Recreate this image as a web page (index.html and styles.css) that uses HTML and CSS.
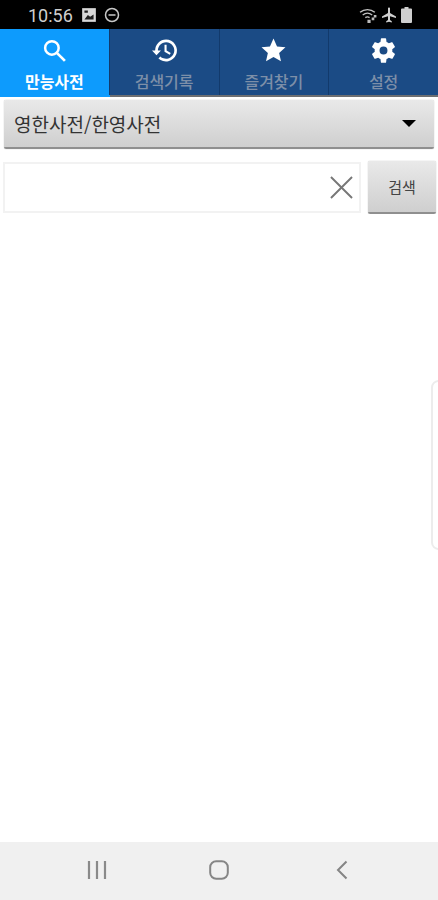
FILE: index.html
```html
<!DOCTYPE html>
<html lang="ko">
<head>
<meta charset="utf-8">
<title>만능사전</title>
<link rel="stylesheet" href="styles.css">
</head>
<body>
<div class="app">
  <header class="status">
    <div class="status-left">
      <span class="time">10:56</span>
      <svg class="ic-pic" viewBox="0 0 14 14"><path fill="#d8d8d8" d="M1 1h12v12H1z"/><path fill="#000" d="M3 3h3v2H3zM3 11l3-4 2 1.500 3-2V11z" opacity=".85"/></svg>
      <svg class="ic-dnd" viewBox="0 0 16 16"><circle cx="8" cy="8" r="6.500" fill="none" stroke="#c8c8c8" stroke-width="1.500"/><path d="M4.500 8h7" stroke="#c8c8c8" stroke-width="1.500"/></svg>
    </div>
    <div class="status-right">
      <svg class="ic-wifi" viewBox="0 0 18 14"><path d="M1 4c4-3.500 10-3.500 14 0M3.500 6.500c3-2.300 6-2.300 9 0M6 9c1.500-1 2.500-1 4 0" fill="none" stroke="#c4c4c4" stroke-width="1.300"/><path fill="#bbb" d="M8 11h3v3H8zM12 9h2.500v2.500H12zM14 6.500h2.500V9H14z"/></svg>
      <svg class="ic-plane" viewBox="0 0 16 16"><path fill="#d0d0d0" d="M7 1.500c0-1.300 2-1.300 2 0V6l6 3.500V11L9 9.300V13l1.800 1.300V15.500L8 14.800l-2.800.7v-1.200L7 13V9.300L1 11V9.500L7 6z"/></svg>
      <svg class="ic-batt" viewBox="0 0 11 16"><path fill="#cfcfcf" d="M3.500 0h4v1.500H10a1 1 0 0 1 1 1V15a1 1 0 0 1-1 1H1a1 1 0 0 1-1-1V2.500a1 1 0 0 1 1-1h2.500z"/></svg>
    </div>
  </header>

  <nav class="tabs">
    <div class="tab active">
      <svg class="tab-icon" viewBox="0 0 24 24"><circle cx="9.500" cy="9.500" r="6.500" fill="none" stroke="#fff" stroke-width="2.400"/><path d="M14.500 14.500l7.500 7.500" stroke="#fff" stroke-width="2.600"/></svg>
      <span class="tab-label">만능사전</span>
    </div>
    <div class="tab">
      <svg class="tab-icon" viewBox="0 0 24 24"><path fill="#fff" d="M13.500 1.500A10.500 10.500 0 0 0 3 12H0l4.300 4.500L8.600 12h-3a7.900 7.900 0 1 1 2.400 5.700l-1.800 1.900A10.500 10.500 0 1 0 13.500 1.500z"/><path fill="#fff" d="M12 6.500v6.600l5 3 1-1.700-4-2.300V6.500z"/></svg>
      <span class="tab-label">검색기록</span>
    </div>
    <div class="tab">
      <svg class="tab-icon" viewBox="0 0 24 24"><path fill="#fff" d="M12 .5l3.400 7.600 8.100.8-6.100 5.400 1.800 8L12 18.200l-7.200 4.100 1.800-8L.5 8.900l8.100-.8z"/></svg>
      <span class="tab-label">즐겨찾기</span>
    </div>
    <div class="tab">
      <svg class="tab-icon" viewBox="0 0 24 24"><path fill="#fff" fill-rule="evenodd" d="M20.400 13.300a8.500 8.500 0 0 0 0-2.600l2.400-1.800a.6.600 0 0 0 .1-.7l-2.300-4a.6.600 0 0 0-.7-.2l-2.800 1.100a8 8 0 0 0-2.200-1.300L14.500.8a.6.600 0 0 0-.6-.5H10.100a.6.600 0 0 0-.6.500L9.100 3.800a8 8 0 0 0-2.200 1.300L4.100 4a.6.600 0 0 0-.7.200l-2.300 4a.6.600 0 0 0 .1.700l2.400 1.800a8.500 8.500 0 0 0 0 2.600l-2.400 1.800a.6.600 0 0 0-.1.700l2.300 4c.1.200.4.300.7.200l2.800-1.100a8 8 0 0 0 2.200 1.300l.4 3c0 .3.300.5.600.5h3.800c.3 0 .6-.2.600-.5l.4-3a8 8 0 0 0 2.200-1.300l2.800 1.100c.3.100.6 0 .7-.2l2.300-4a.6.600 0 0 0-.1-.7zM12 15.800a3.800 3.800 0 1 1 0-7.600 3.800 3.800 0 0 1 0 7.600z"/></svg>
      <span class="tab-label">설정</span>
    </div>
  </nav>
  <div class="tabs-rule"><span class="rule-active"></span></div>

  <div class="select-row">
    <div class="select">
      <span class="select-text">영한사전/한영사전</span>
      <span class="caret"></span>
    </div>
  </div>

  <div class="search-row">
    <div class="search-box">
      <svg class="clear" viewBox="0 0 24 24"><path d="M1 1l22 22M23 1L1 23" stroke="#777" stroke-width="2" fill="none"/></svg>
    </div>
    <div class="search-btn">검색</div>
  </div>

  <main class="content">
    <div class="edge-handle"></div>
  </main>

  <footer class="navbar">
    <svg class="nav-recent" viewBox="0 0 20 20"><path d="M2 1v18M10 1v18M18 1v18" stroke="#8a8a8a" stroke-width="2.200"/></svg>
    <svg class="nav-home" viewBox="0 0 20 20"><rect x="1.200" y="1.200" width="17.600" height="17.600" rx="6" fill="none" stroke="#858585" stroke-width="2"/></svg>
    <svg class="nav-back" viewBox="0 0 12 20"><path d="M10.500 1.500L2 10l8.500 8.500" fill="none" stroke="#858585" stroke-width="2"/></svg>
  </footer>
</div>
</body>
</html>
```

FILE: styles.css
```css
* { box-sizing: border-box; }
html, body { margin: 0; padding: 0; background: #fff; }
body { font-family: "Noto Sans CJK KR", "Noto Sans", sans-serif; }
.app { width: 438px; height: 900px; display: flex; flex-direction: column; overflow: hidden; }

.status { height: 29px; flex: none; background: #000; display: flex; justify-content: space-between; align-items: center; padding: 1px 26px 0 28px; }
.status-left { display: flex; align-items: center; }
.status-right { display: flex; align-items: center; }
.time { font-family: Roboto, sans-serif; font-size: 18px; color: #cfcfcf; width: 53px; }
.ic-pic { width: 16px; height: 16px; margin-right: 7px; }
.ic-dnd { width: 16px; height: 16px; }
.ic-wifi { width: 19px; height: 15px; margin-right: 3px; }
.ic-plane { width: 16px; height: 16px; margin-right: 4px; }
.ic-batt { width: 11px; height: 16px; }

.tabs { height: 66px; flex: none; display: flex; background: #1b4b85; }
.tab { flex: 1 1 0; display: flex; flex-direction: column; align-items: center; padding-top: 9px; border-left: 1px solid #123a6c; }
.tab.active { background: #0d9bfd; border-left: 0; }
.tab-icon { width: 25px; height: 25px; flex: none; }
.tab-label { font-size: 16px; line-height: 20px; margin-top: 8px; color: #7d8fa8; font-weight: 500; }
.active .tab-label { color: #fff; font-weight: 700; }
.tabs-rule { height: 2px; flex: none; background: #6d6f72; }
.rule-active { display: block; width: 110px; height: 2px; background: #0d9bfd; }

.select-row { flex: none; padding: 3px 4px 0; }
.select { height: 49px; display: flex; align-items: center; justify-content: space-between; padding: 0 18px 0 10px; border-radius: 2px; background: linear-gradient(#e9e9e9, #cfcfcf); border-bottom: 2px solid #8f8f8f; box-shadow: 0 0 1px #9a9a9a; }
.select-text { font-size: 19px; color: #333; }
.caret { width: 0; height: 0; border-left: 7px solid transparent; border-right: 7px solid transparent; border-top: 7px solid #000; }

.search-row { flex: none; display: flex; align-items: flex-start; padding: 12px 2px 0 3px; }
.search-box { width: 358px; height: 51px; margin-top: 1px; background: #fff; border: 2px solid #f2f2f2; display: flex; align-items: center; justify-content: flex-end; padding-right: 6px; }
.clear { width: 23px; height: 23px; }
.search-btn { width: 68px; height: 53px; margin-left: 7px; display: flex; align-items: center; justify-content: center; font-size: 15px; color: #444; border-radius: 2px; background: linear-gradient(#e9e9e9, #cfcfcf); border-bottom: 2px solid #8f8f8f; box-shadow: 0 0 1px #9a9a9a; }

.content { flex: 1 1 auto; position: relative; background: #fff; }
.edge-handle { position: absolute; right: -8px; top: 166px; width: 15px; height: 170px; border: 2px solid #ececec; border-radius: 8px; background: #fff; }

.navbar { height: 58px; flex: none; background: #f0f0f0; display: flex; align-items: center; padding-bottom: 2px; position: relative; }
.nav-recent { width: 20px; height: 20px; margin-left: 87px; }
.nav-home { width: 20px; height: 20px; margin-left: 102px; }
.nav-back { width: 12px; height: 20px; margin-left: 107px; }
```
